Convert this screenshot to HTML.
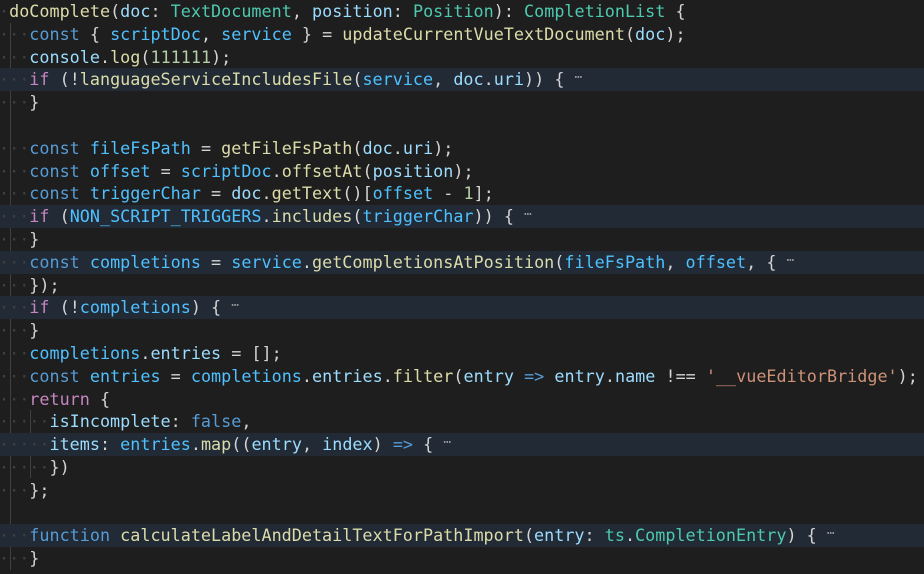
<!DOCTYPE html>
<html><head><meta charset="utf-8"><style>
html,body{margin:0;padding:0;background:#1e1e1e;width:924px;height:574px;overflow:hidden}
#ed{position:relative;font-family:"DejaVu Sans Mono","Liberation Mono",monospace;font-size:16.77px;color:#d4d4d4}
.l{height:22.8px;line-height:22.8px;white-space:pre;padding-left:0;position:relative}
.l span.t{position:relative;left:-1px}
.h{background:#212a35}
.w{color:#404040}
.k{color:#569cd6}.c{color:#4fc1ff}.v{color:#9cdcfe}.f{color:#dcdcaa}.ty{color:#4ec9b0}
.p{color:#c586c0}.n{color:#b5cea8}.s{color:#ce9178}.e{color:#9a9a9a;font-size:13px;position:relative;top:-4px}
.g{position:absolute;width:1px;background:#404040}
</style></head><body><div id="ed">
<div class="g" style="left:10px;top:22.8px;height:547px"></div>
<div class="g" style="left:30px;top:410px;height:68px"></div>
<div class="l"><span class="t"><span class="w">·</span><span class="f">doComplete</span>(<span class="v">doc</span>: <span class="ty">TextDocument</span>, <span class="v">position</span>: <span class="ty">Position</span>): <span class="ty">CompletionList</span> {</span></div>
<div class="l"><span class="t"><span class="w">···</span><span class="k">const</span> { <span class="c">scriptDoc</span>, <span class="c">service</span> } = <span class="f">updateCurrentVueTextDocument</span>(<span class="v">doc</span>);</span></div>
<div class="l"><span class="t"><span class="w">···</span><span class="v">console</span>.<span class="f">log</span>(<span class="n">111111</span>);</span></div>
<div class="l h"><span class="t"><span class="w">···</span><span class="p">if</span> (!<span class="f">languageServiceIncludesFile</span>(<span class="c">service</span>, <span class="v">doc</span>.<span class="v">uri</span>)) { <span class="e">⋯</span></span></div>
<div class="l"><span class="t"><span class="w">···</span>}</span></div>
<div class="l"><span class="t"> </span></div>
<div class="l"><span class="t"><span class="w">···</span><span class="k">const</span> <span class="c">fileFsPath</span> = <span class="f">getFileFsPath</span>(<span class="v">doc</span>.<span class="v">uri</span>);</span></div>
<div class="l"><span class="t"><span class="w">···</span><span class="k">const</span> <span class="c">offset</span> = <span class="c">scriptDoc</span>.<span class="f">offsetAt</span>(<span class="v">position</span>);</span></div>
<div class="l"><span class="t"><span class="w">···</span><span class="k">const</span> <span class="c">triggerChar</span> = <span class="v">doc</span>.<span class="f">getText</span>()[<span class="c">offset</span> - <span class="n">1</span>];</span></div>
<div class="l h"><span class="t"><span class="w">···</span><span class="p">if</span> (<span class="c">NON_SCRIPT_TRIGGERS</span>.<span class="f">includes</span>(<span class="c">triggerChar</span>)) { <span class="e">⋯</span></span></div>
<div class="l"><span class="t"><span class="w">···</span>}</span></div>
<div class="l h"><span class="t"><span class="w">···</span><span class="k">const</span> <span class="c">completions</span> = <span class="c">service</span>.<span class="f">getCompletionsAtPosition</span>(<span class="c">fileFsPath</span>, <span class="c">offset</span>, { <span class="e">⋯</span></span></div>
<div class="l"><span class="t"><span class="w">···</span>});</span></div>
<div class="l h"><span class="t"><span class="w">···</span><span class="p">if</span> (!<span class="c">completions</span>) { <span class="e">⋯</span></span></div>
<div class="l"><span class="t"><span class="w">···</span>}</span></div>
<div class="l"><span class="t"><span class="w">···</span><span class="c">completions</span>.<span class="v">entries</span> = [];</span></div>
<div class="l"><span class="t"><span class="w">···</span><span class="k">const</span> <span class="c">entries</span> = <span class="c">completions</span>.<span class="v">entries</span>.<span class="f">filter</span>(<span class="v">entry</span> <span class="k">=&gt;</span> <span class="v">entry</span>.<span class="v">name</span> !== <span class="s">'__vueEditorBridge'</span>);</span></div>
<div class="l"><span class="t"><span class="w">···</span><span class="p">return</span> {</span></div>
<div class="l"><span class="t"><span class="w">·····</span><span class="v">isIncomplete</span>: <span class="k">false</span>,</span></div>
<div class="l h"><span class="t"><span class="w">·····</span><span class="v">items</span>: <span class="c">entries</span>.<span class="f">map</span>((<span class="v">entry</span>, <span class="v">index</span>) <span class="k">=&gt;</span> { <span class="e">⋯</span></span></div>
<div class="l"><span class="t"><span class="w">·····</span>})</span></div>
<div class="l"><span class="t"><span class="w">···</span>};</span></div>
<div class="l"><span class="t"> </span></div>
<div class="l h"><span class="t"><span class="w">···</span><span class="k">function</span> <span class="f">calculateLabelAndDetailTextForPathImport</span>(<span class="v">entry</span>: <span class="ty">ts</span>.<span class="ty">CompletionEntry</span>) { <span class="e">⋯</span></span></div>
<div class="l"><span class="t"><span class="w">···</span>}</span></div>
</div></body></html>
